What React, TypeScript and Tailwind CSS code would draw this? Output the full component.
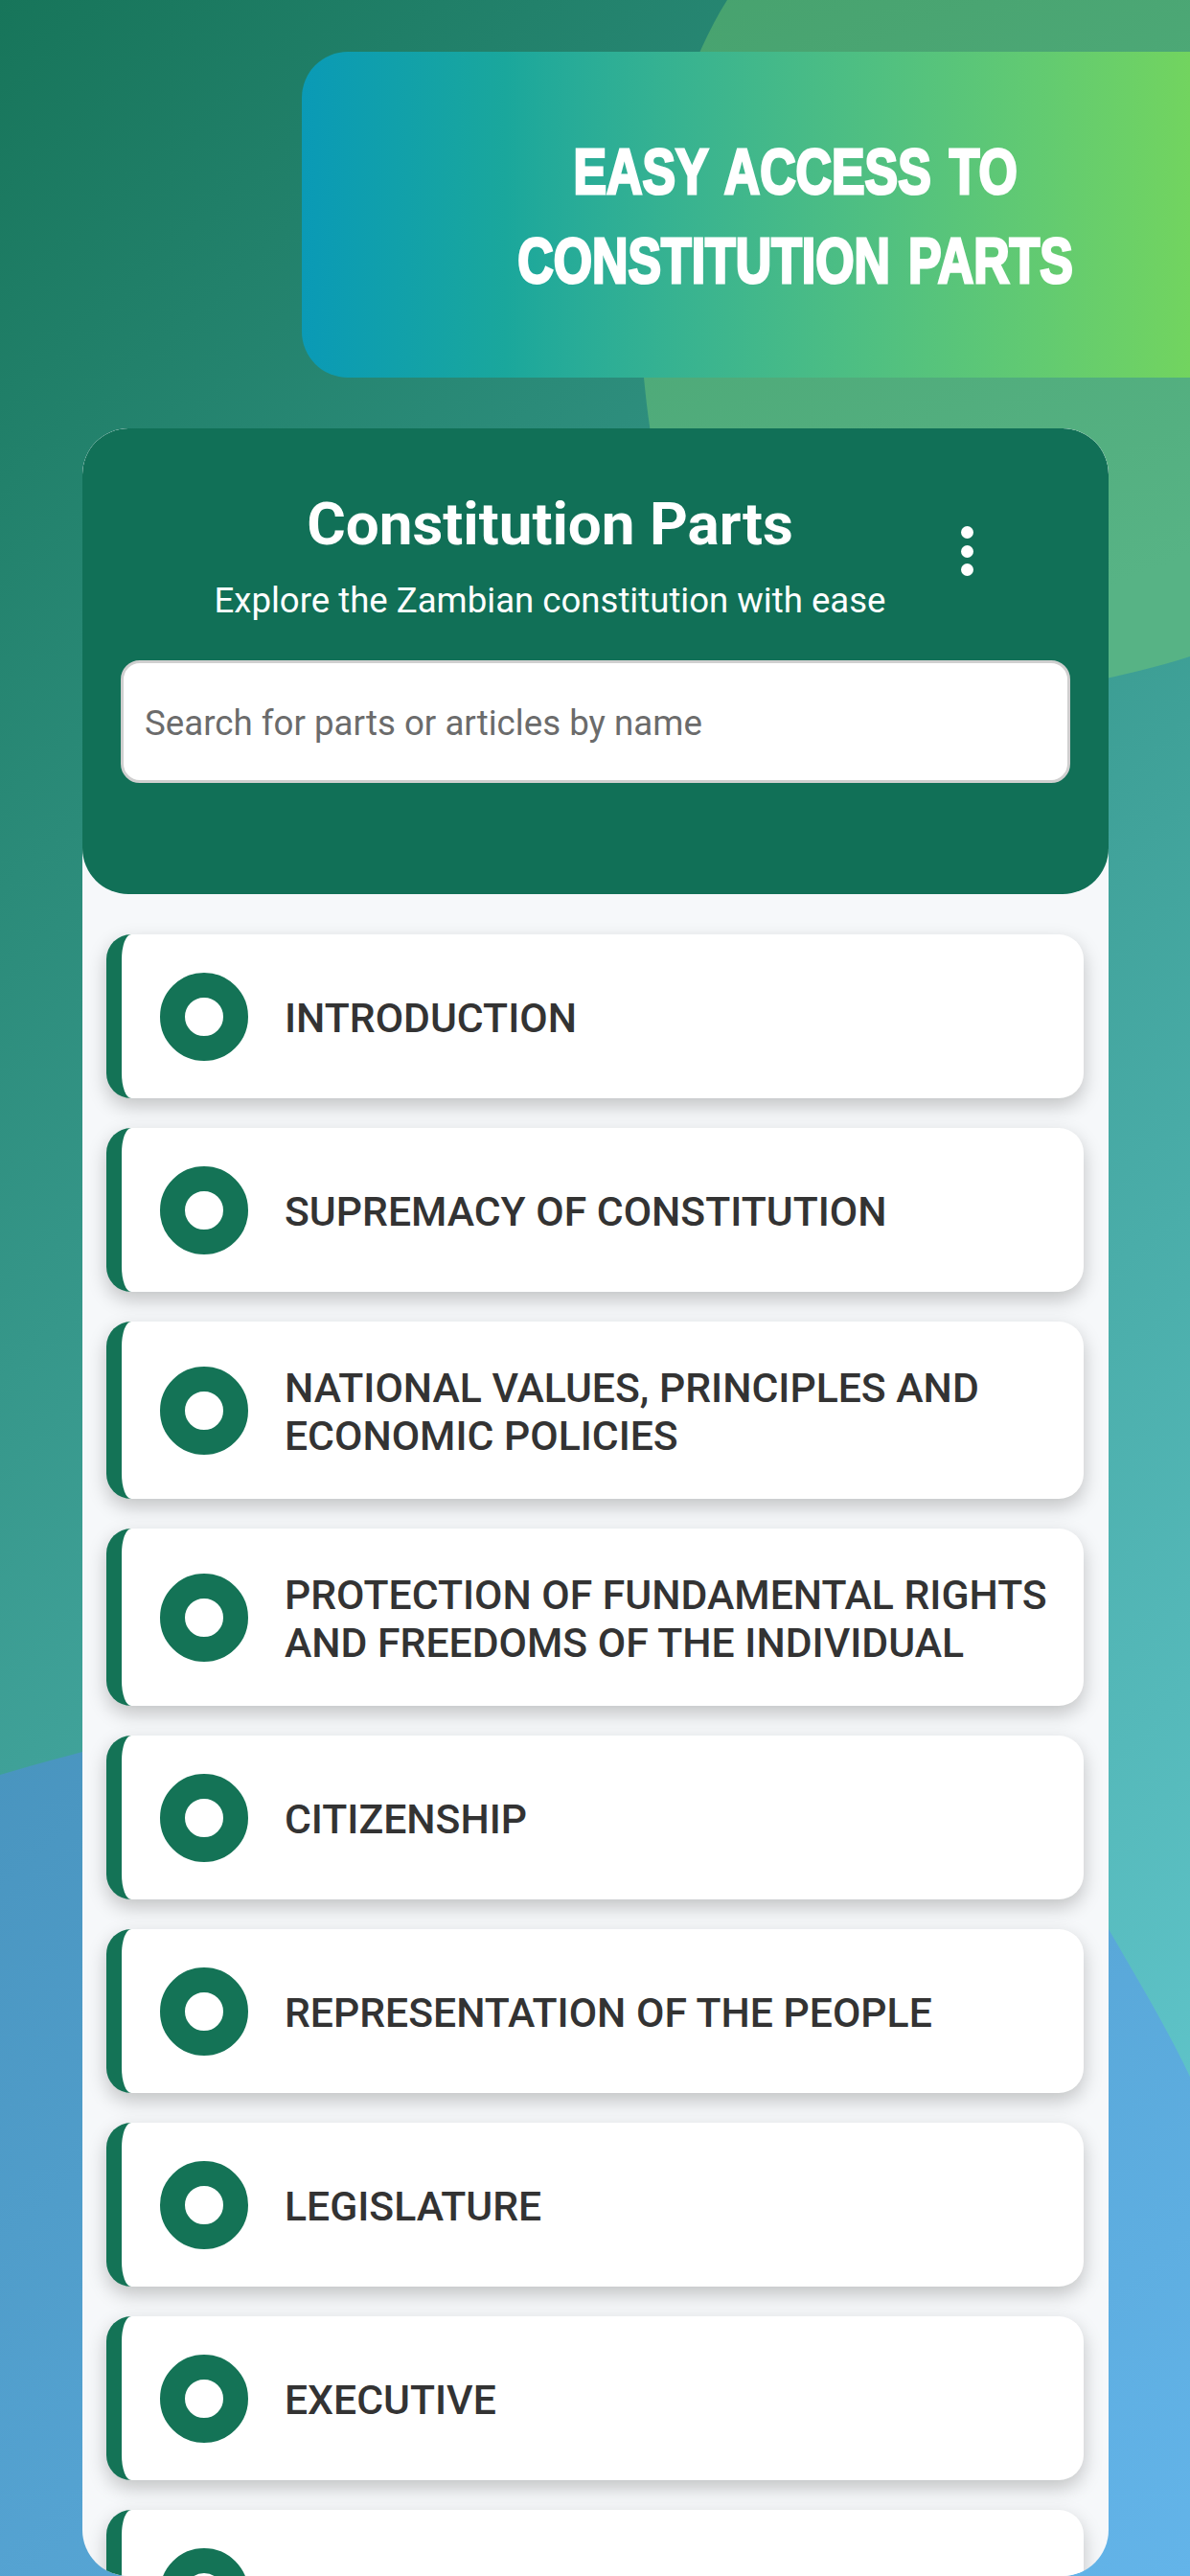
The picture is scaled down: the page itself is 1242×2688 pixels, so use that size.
const parts = [
  'INTRODUCTION',
  'SUPREMACY OF CONSTITUTION',
  'NATIONAL VALUES, PRINCIPLES AND ECONOMIC POLICIES',
  'PROTECTION OF FUNDAMENTAL RIGHTS AND FREEDOMS OF THE INDIVIDUAL',
  'CITIZENSHIP',
  'REPRESENTATION OF THE PEOPLE',
  'LEGISLATURE',
  'EXECUTIVE',
  '',
];

function Backdrop() {
  return (
    <svg className="absolute inset-0" width="1242" height="2688" viewBox="0 0 1242 2688">
      <defs>
        <linearGradient id="greenBlob" x1="0" y1="0" x2="0.3" y2="1">
          <stop offset="0" stopColor="#47a26e" />
          <stop offset="1" stopColor="#57b385" />
        </linearGradient>
        <linearGradient id="blueBlob" x1="0" y1="0" x2="1" y2="1">
          <stop offset="0" stopColor="#4691ba" />
          <stop offset="1" stopColor="#63b4e9" />
        </linearGradient>
      </defs>
      <path d="M759 0C705 85 668 230 672 394C680 480 705 620 760 720C900 750 1100 730 1242 685L1242 0Z" fill="url(#greenBlob)" />
      <path d="M0 1852C30 1843 60 1835 86 1828C300 1700 600 1560 800 1620C1000 1700 1110 1860 1157 2013C1190 2070 1220 2120 1242 2167L1242 2688L0 2688Z" fill="url(#blueBlob)" />
    </svg>
  );
}

export default function App() {
  return (
    <div className="relative w-[1242px] h-[2688px] overflow-hidden bg-[linear-gradient(138deg,#17755a,#69cfd9)] font-['Roboto',sans-serif]">
      <Backdrop />
      <div className="relative flex flex-col h-full">
        <div className="ml-[315px] mt-[54px] h-[340px] shrink-0 rounded-l-[48px] bg-linear-to-r from-[#0a9ab6] via-[#1aa79c] via-[23%] to-[#72d45f] flex flex-col items-center justify-center pl-[104px] pt-[4px] text-white font-['Liberation_Sans',sans-serif] font-bold text-[66px] leading-[93px] [word-spacing:6px] [-webkit-text-stroke:3px_white]">
          <div className="whitespace-nowrap scale-x-[0.785]">EASY ACCESS TO</div>
          <div className="whitespace-nowrap scale-x-[0.785]">CONSTITUTION PARTS</div>
        </div>

        <div className="ml-[86px] mr-[85px] mt-[53px] flex-1 min-h-0 rounded-[48px] overflow-hidden bg-[#f6f8fa] flex flex-col">
          <div className="h-[486px] shrink-0 rounded-[48px] bg-[#117057] px-[40px] pt-[65px]">
            <div className="flex h-[177px]">
              <div className="w-[896px] text-center text-white">
                <div className="text-[62px] leading-[70px] font-bold">Constitution Parts</div>
                <div className="mt-[24px] text-[36.6px] leading-[42px]">Explore the Zambian constitution with ease</div>
              </div>
              <div className="ml-[-19px] pt-[37px] flex flex-col gap-[6.5px]">
                <span className="block w-[13px] h-[13px] rounded-full bg-white" />
                <span className="block w-[13px] h-[13px] rounded-full bg-white" />
                <span className="block w-[13px] h-[13px] rounded-full bg-white" />
              </div>
            </div>
            <div className="h-[128px] rounded-[20px] bg-white border-[3px] border-[#cfcfcf] flex items-center px-[22px] pt-[3px] text-[36.7px] text-[#6b6b6b]">
              Search for parts or articles by name
            </div>
          </div>

          <div className="flex flex-col gap-[31px] pl-[25px] pr-[26px] pt-[42px]">
            {parts.map((part, i) => (
              <div
                key={i}
                className="shrink-0 flex items-center min-h-[171px] rounded-[26px] bg-white border-l-[16px] border-[#147356] pl-[40px] pr-[20px] py-[39px] shadow-[0_8px_20px_rgba(0,0,0,0.22)]"
              >
                <span className="block w-[92px] h-[92px] shrink-0 rounded-full border-[26px] border-[#147356]" />
                <div className="ml-[38px] flex-1 pt-[5px] pb-[2px] text-[42.7px] leading-[50px] font-medium text-[#333333]">{part}</div>
              </div>
            ))}
          </div>
        </div>
      </div>
    </div>
  );
}
